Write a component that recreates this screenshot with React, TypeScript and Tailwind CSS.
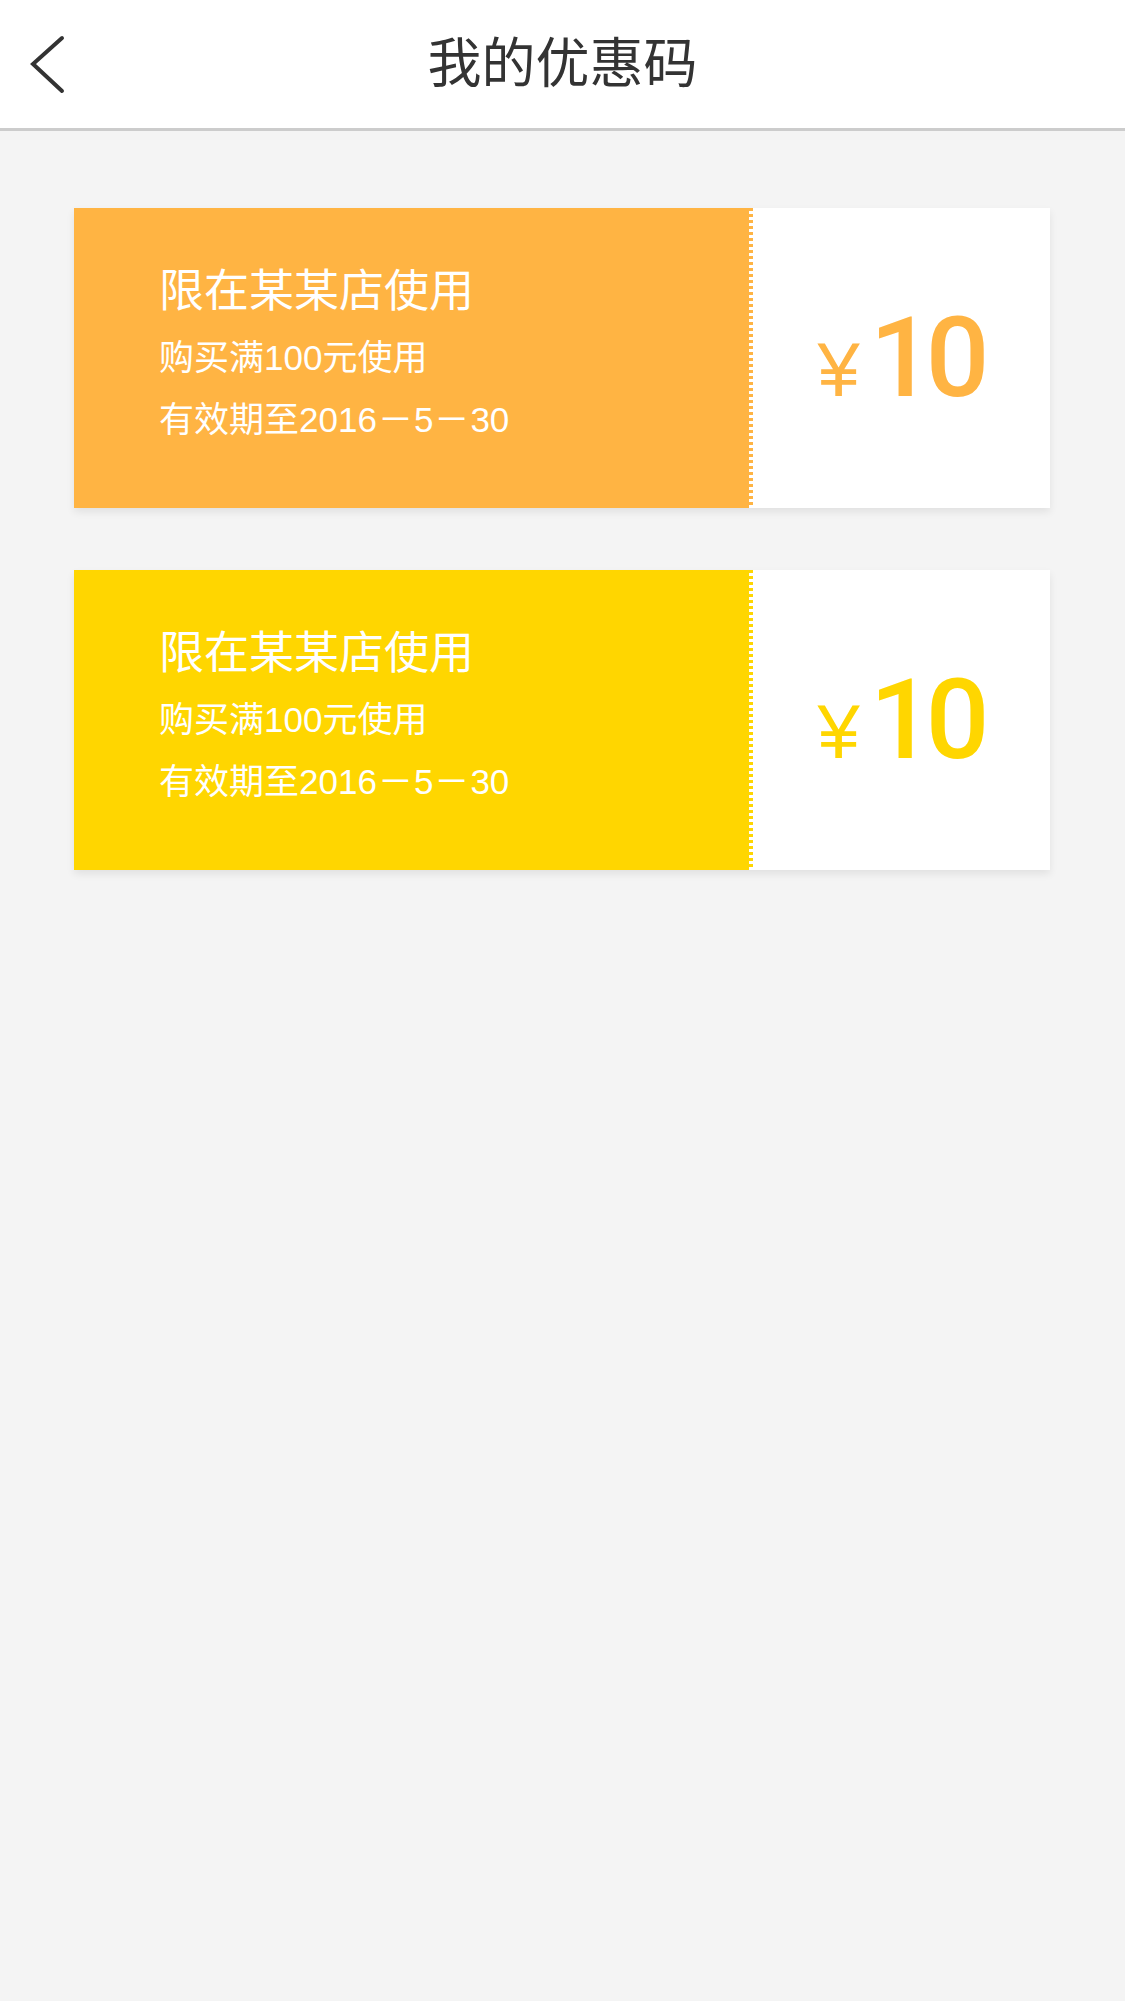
import React from "react";

const coupons = [
  {
    bg: "bg-[#ffb443]",
    text: "text-[#ffb443]",
    teeth:
      "bg-[repeating-linear-gradient(to_bottom,#ffb443_0px,#ffb443_3px,transparent_3px,transparent_6px)]",
  },
  {
    bg: "bg-[#ffd600]",
    text: "text-[#ffd600]",
    teeth:
      "bg-[repeating-linear-gradient(to_bottom,#ffd600_0px,#ffd600_3px,transparent_3px,transparent_6px)]",
  },
];

const font = "font-['Liberation_Sans','Noto_Sans_CJK_SC',sans-serif]";

function Coupon({ c }: { c: (typeof coupons)[number] }) {
  return (
    <div className="flex h-[300px] shadow-[0_4px_8px_rgba(0,0,0,0.08)]">
      {/* left side */}
      <div className={`relative w-[675px] ${c.bg} pl-[85px] pt-[49px] text-white`}>
        <div className="text-[45px] leading-[70px]">限在某某店使用</div>
        <div className="text-[35px] leading-[62px]">购买满100元使用</div>
        <div className="text-[35px] leading-[62px]">
          有效期至2016<span className="mx-[1px]">－</span>5<span className="mx-[1px]">－</span>30
        </div>
        {/* serrated edge */}
        <div className={`absolute top-0 bottom-0 right-[-4px] w-[4px] ${c.teeth}`} />
      </div>

      {/* amount */}
      <div className={`flex flex-1 items-center justify-center bg-white ${c.text}`}>
        <div className="flex items-baseline">
          <span className="mr-[10px] text-[76px] leading-none">¥</span>
          <span className="font-['Roboto'] text-[112px] font-medium leading-none tracking-[-0.07em]">
            10
          </span>
        </div>
      </div>
    </div>
  );
}

export default function App() {
  return (
    <div className={`min-h-[2001px] bg-[#f4f4f4] ${font}`}>
      <header className="grid h-[131px] grid-cols-[1fr_auto_1fr] items-center border-b-[3px] border-[#cccccc] bg-white">
        <div className="pl-[28px]">
          <svg width="40" height="62" viewBox="0 0 40 62" fill="none">
            <path
              d="M34 5 L5 31 L34 58"
              stroke="#333333"
              strokeWidth="4"
              strokeLinecap="round"
              strokeLinejoin="miter"
            />
          </svg>
        </div>
        <h1 className="text-[54px] font-normal text-[#333333]">我的优惠码</h1>
        <div />
      </header>

      <main className="flex flex-col gap-[62px] pl-[74px] pr-[75px] pt-[77px]">
        {coupons.map((c, i) => (
          <Coupon key={i} c={c} />
        ))}
      </main>
    </div>
  );
}
